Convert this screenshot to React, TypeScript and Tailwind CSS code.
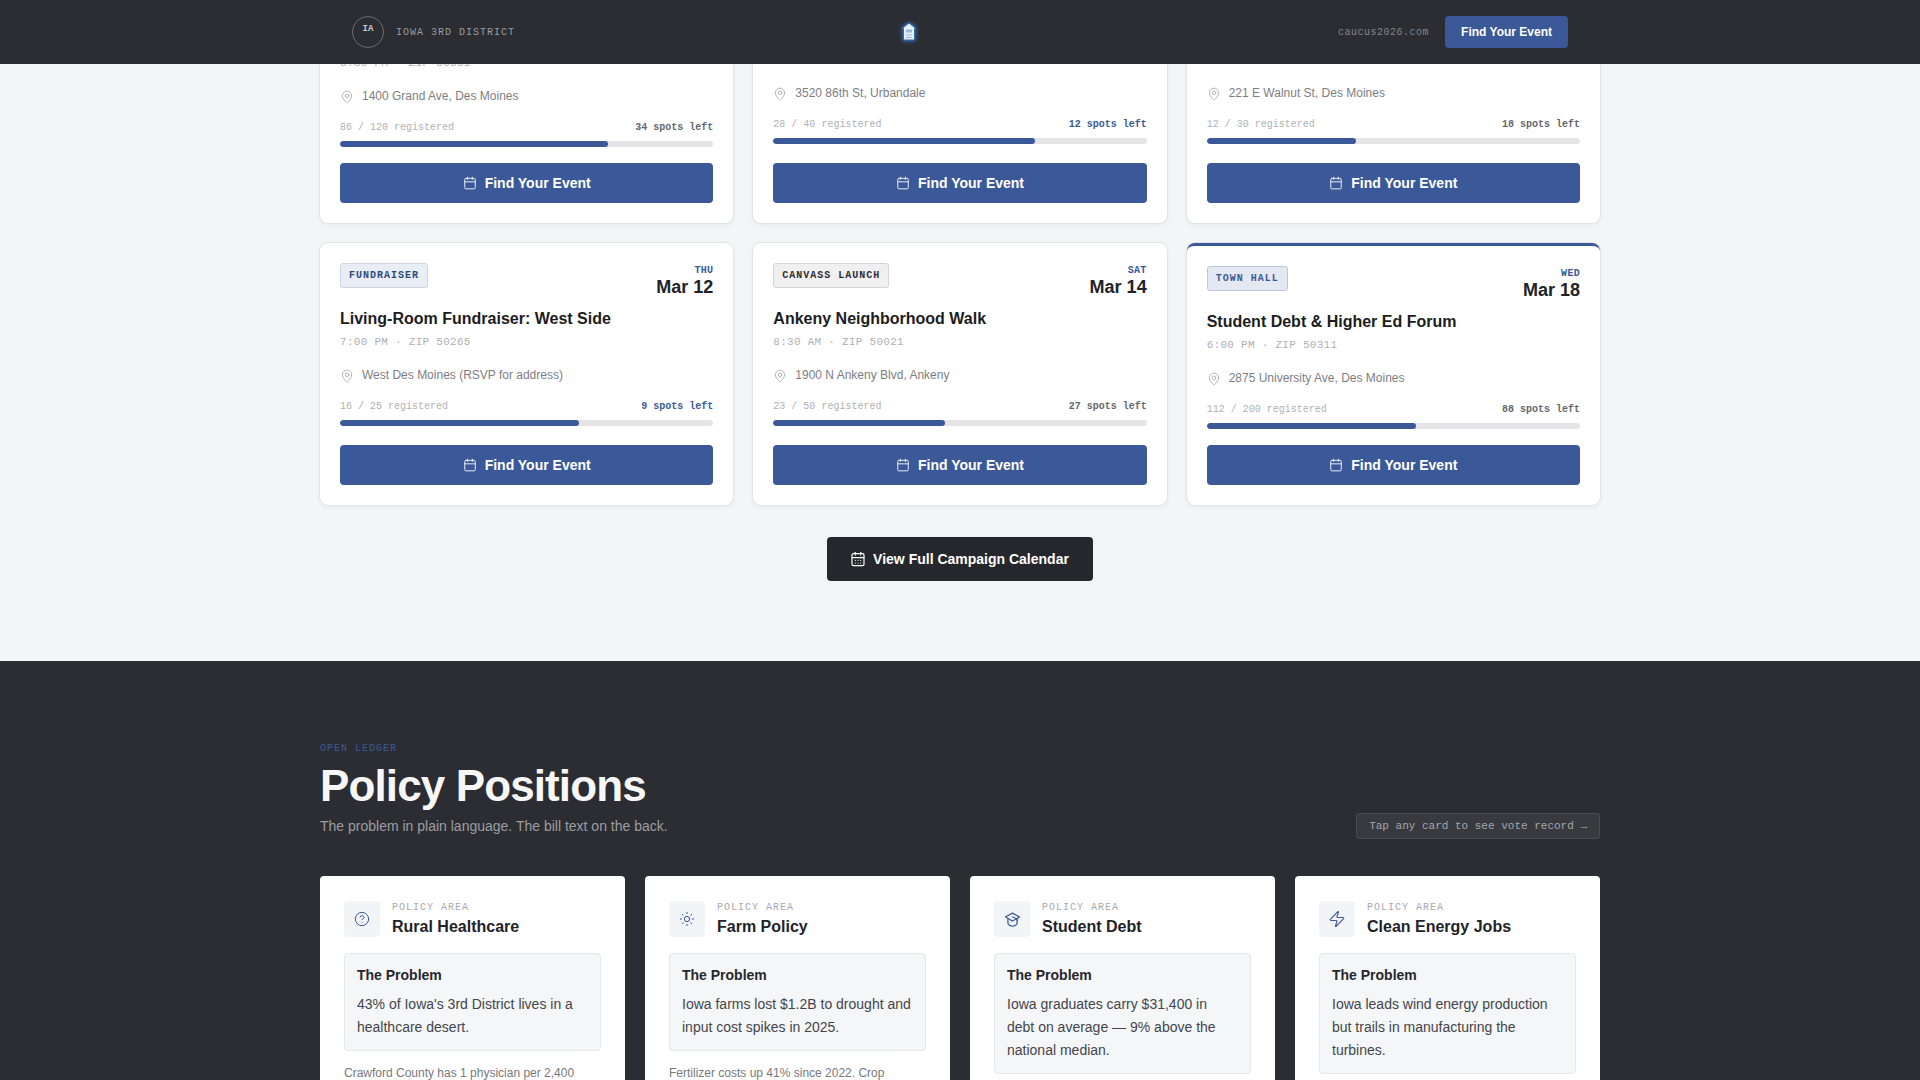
import React from 'react';
import { Calendar, CalendarDays, CircleHelp, MapPin, Sun, Zap } from 'lucide-react';

const mono = "font-['Liberation_Mono',monospace]";

interface EventItem {
  tag: string;
  tagClass: string;
  day: string;
  date: string;
  title: string;
  time: string;
  address: string;
  registered: number;
  capacity: number;
  accent?: boolean;
}

const TOWN_HALL = 'bg-[#e4e8f2] text-[#3b5998] border-[#bcc6da]';
const FUNDRAISER = 'bg-[#e9edf5] text-[#2f4a7d] border-[#cdd5e4]';
const CANVASS = 'bg-[#f0f0f0] text-[#2c2d33] border-[#d4d4d4]';

const events: EventItem[] = [
  { tag: 'TOWN HALL', tagClass: TOWN_HALL, day: 'TUE', date: 'Mar 3', title: 'Healthcare Town Hall', time: '6:30 PM · ZIP 50301', address: '1400 Grand Ave, Des Moines', registered: 86, capacity: 120, accent: true },
  { tag: 'FUNDRAISER', tagClass: FUNDRAISER, day: 'SAT', date: 'Mar 7', title: 'Coffee & Conversation', time: '9:00 AM · ZIP 50322', address: '3520 86th St, Urbandale', registered: 28, capacity: 40 },
  { tag: 'CANVASS LAUNCH', tagClass: CANVASS, day: 'SUN', date: 'Mar 8', title: 'East Village Door Knock', time: '1:00 PM · ZIP 50309', address: '221 E Walnut St, Des Moines', registered: 12, capacity: 30 },
  { tag: 'FUNDRAISER', tagClass: FUNDRAISER, day: 'THU', date: 'Mar 12', title: 'Living-Room Fundraiser: West Side', time: '7:00 PM · ZIP 50265', address: 'West Des Moines (RSVP for address)', registered: 16, capacity: 25 },
  { tag: 'CANVASS LAUNCH', tagClass: CANVASS, day: 'SAT', date: 'Mar 14', title: 'Ankeny Neighborhood Walk', time: '8:30 AM · ZIP 50021', address: '1900 N Ankeny Blvd, Ankeny', registered: 23, capacity: 50 },
  { tag: 'TOWN HALL', tagClass: TOWN_HALL, day: 'WED', date: 'Mar 18', title: 'Student Debt & Higher Ed Forum', time: '6:00 PM · ZIP 50311', address: '2875 University Ave, Des Moines', registered: 112, capacity: 200, accent: true },
];

// lucide's cap sits too flat next to the reference, this one is taller
function StudentCap() {
  return (
    <svg width="17" height="17" viewBox="0 0 24 24" fill="none" stroke="currentColor" strokeWidth="1.7" strokeLinecap="round" strokeLinejoin="round">
      <path d="M12 3 L22 8.5 L12 14 L2 8.5 Z" />
      <path d="M5.5 11 V17 C5.5 19.5 9 21.5 12 21.5 C15 21.5 18.5 19.5 18.5 17 V11" />
      <path d="M12 8.5 L18.5 11 V14" />
    </svg>
  );
}

const policies = [
  { icon: <CircleHelp size={16} strokeWidth={1.5} />, title: 'Rural Healthcare', problem: "43% of Iowa's 3rd District lives in a healthcare desert.", detail: 'Crawford County has 1 physician per 2,400' },
  { icon: <Sun size={16} strokeWidth={1.5} />, title: 'Farm Policy', problem: 'Iowa farms lost $1.2B to drought and input cost spikes in 2025.', detail: 'Fertilizer costs up 41% since 2022. Crop' },
  { icon: <StudentCap />, title: 'Student Debt', problem: 'Iowa graduates carry $31,400 in debt on average — 9% above the national median.' },
  { icon: <Zap size={18} strokeWidth={1.5} />, title: 'Clean Energy Jobs', problem: 'Iowa leads wind energy production but trails in manufacturing the turbines.' },
];

function EventCard({ event }: { event: EventItem }) {
  const left = event.capacity - event.registered;
  return (
    <div className={`flex h-[262px] flex-col rounded-lg bg-white p-5 shadow-[0_0_0_1px_#e2e3e8,0_2px_6px_rgba(0,0,0,0.06)] ${event.accent ? 'border-t-[3px] border-[#3b5998]' : ''}`}>
      <div className="flex items-start justify-between">
        <span className={`${mono} rounded-[3px] border px-2 py-1 text-[10px] font-bold tracking-[0.1em] ${event.tagClass}`}>{event.tag}</span>
        <div className="text-right">
          <div className={`${mono} mt-[1px] text-[10px] leading-[14px] font-bold tracking-[0.03em] text-[#3b5998]`}>{event.day}</div>
          <div className="-mt-[1px] text-lg leading-[20px] font-bold text-[#222328]">{event.date}</div>
        </div>
      </div>
      <h3 className="mt-[11px] text-base leading-[22px] font-bold text-[#1c1d21]">{event.title}</h3>
      <p className={`${mono} mt-[4px] text-[11px] leading-[16px] tracking-[0.025em] text-[#b0b0b4]`}>{event.time}</p>
      <div className="mt-[16px] flex items-center gap-2 text-xs leading-[18px] text-[#7d7e83]">
        <MapPin size={14} strokeWidth={1.5} className="mt-[1px] shrink-0 text-[#a9abb0]" />
        <span>{event.address}</span>
      </div>
      <div className={`${mono} mt-[16px] flex justify-between text-[10px] leading-[14px]`}>
        <span className="text-[#b0b1b4]">{event.registered} / {event.capacity} registered</span>
        <span className={`font-bold ${left <= 12 ? 'text-[#3b5998]' : 'text-[#66676c]'}`}>{left} spots left</span>
      </div>
      <div className="mt-[6px] h-1.5 overflow-hidden rounded-full bg-[#e5e5e7]">
        <div className="h-full rounded-full bg-[#3b5998]" style={{ width: `${(event.registered / event.capacity) * 100}%` }} />
      </div>
      <button className="mt-auto flex h-10 items-center justify-center gap-2 rounded bg-[#3b5998] text-sm font-bold text-white">
        <Calendar size={14} strokeWidth={1.5} />
        Find Your Event
      </button>
    </div>
  );
}

function PolicyCard({ policy }: { policy: (typeof policies)[number] }) {
  return (
    <div className="rounded bg-white px-6 pt-[25px] pb-6">
      <div className="flex items-start gap-3">
        <div className="flex h-9 w-9 items-center justify-center rounded bg-[#f3f4f7] text-[#3b5998]">
          {policy.icon}
        </div>
        <div>
          <div className={`${mono} mt-[1px] text-[10px] leading-[12px] tracking-[0.1em] text-[#a8a9ad]`}>POLICY AREA</div>
          <div className="mt-[2px] text-base leading-[22px] font-bold text-[#222328]">{policy.title}</div>
        </div>
      </div>
      <div className="mt-[15px] rounded border border-[#e6e7ea] bg-[#f5f6f8] px-3 py-[11px]">
        <div className="text-sm leading-5 font-bold text-[#26272c]">The Problem</div>
        <p className="mt-[8px] text-sm leading-[23px] text-[#44454b]">{policy.problem}</p>
      </div>
      {policy.detail && <p className="mt-[13px] text-xs leading-[19px] text-[#77787d]">{policy.detail}</p>}
    </div>
  );
}

export default function App() {
  return (
    <div className="relative h-screen overflow-hidden bg-[#f4f5f7] font-['Liberation_Sans',Arial,sans-serif]">
      <nav className="absolute inset-x-0 top-0 z-10 h-16 bg-[#2c2d33]">
        <div className="relative mx-auto flex h-full max-w-[1280px] items-center justify-between px-8">
          <div className="flex items-center gap-3">
            <div className={`${mono} flex h-8 w-8 items-center justify-center rounded-full border border-[#6b6c70] pb-1 text-[9px] font-bold text-[#c8c9cc]`}>IA</div>
            <span className={`${mono} text-[10px] tracking-[0.1em] text-[#9a9ba0]`}>IOWA 3RD DISTRICT</span>
          </div>
          {/* house mark in the middle of the bar */}
          <svg width="18" height="20" viewBox="0 0 18 20" className="absolute top-[22px] left-[580px] drop-shadow-[0_0_2px_#3b82f6]">
            <path d="M9 1 L16 6.5 H14.5 V18 H3.5 V6.5 H2 Z" fill="#e6f0fb" stroke="#2a6cb0" strokeWidth="1" strokeLinejoin="round" />
            <rect x="6" y="7.5" width="6" height="3" fill="#9db6d3" />
            <path d="M6 13 H12 M6 15.5 H12" stroke="#9db6d3" strokeWidth="1" />
          </svg>
          <div className="flex items-center gap-4">
            <span className={`${mono} text-[10px] tracking-[0.05em] text-[#85868b]`}>caucus2026.com</span>
            <button className="h-8 rounded bg-[#3b5998] px-4 text-xs font-bold text-white">Find Your Event</button>
          </div>
        </div>
      </nav>

      <main className="-mt-[39px]">
        <section className="mx-auto max-w-[1280px] pb-20">
          <div className="grid grid-cols-3 gap-5">
            {events.map((event) => (
              <EventCard key={event.title} event={event} />
            ))}
          </div>
          <div className="mt-8 flex justify-center">
            <button className="flex h-11 items-center gap-[6px] rounded bg-[#26272c] px-6 text-sm font-bold text-white">
              <CalendarDays size={16} strokeWidth={1.75} className="-ml-[1px] mr-[1px]" />
              View Full Campaign Calendar
            </button>
          </div>
        </section>

        <section className="bg-[#2c2d33] pt-20">
          <div className="mx-auto max-w-[1280px] pb-10">
            <div className="flex items-end justify-between">
              <div className="pb-[3px]">
                <div className={`${mono} mt-[1px] text-[10px] leading-[14px] tracking-[0.1em] text-[#3b5998]`}>OPEN LEDGER</div>
                <h2 className="mt-[4px] text-[44px] leading-[52px] font-bold tracking-[-0.02em] text-[#f7f7f8]">Policy Positions</h2>
                <p className="mt-[4px] text-sm leading-5 text-[#9c9da2]">The problem in plain language. The bill text on the back.</p>
              </div>
              <div className={`${mono} rounded-[3px] border border-[#4a4b51] bg-[#393a40] px-3 py-1 text-[11px] text-[#a5a6aa]`}>Tap any card to see vote record →</div>
            </div>
            <div className="mt-[37px] grid grid-cols-4 gap-5">
              {policies.map((policy) => (
                <PolicyCard key={policy.title} policy={policy} />
              ))}
            </div>
          </div>
        </section>
      </main>
    </div>
  );
}
